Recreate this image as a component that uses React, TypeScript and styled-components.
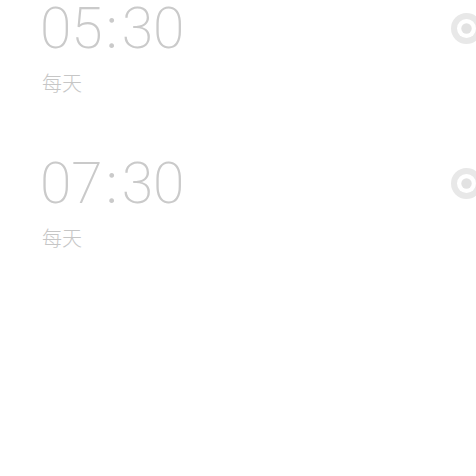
import React from 'react'
import styled, { createGlobalStyle } from 'styled-components'

const GlobalStyle = createGlobalStyle`
  html, body {
    margin: 0;
    padding: 0;
    background: #ffffff;
    overflow: hidden;
  }
  body {
    font-family: Roboto, "Noto Sans CJK SC", sans-serif;
  }
`

const alarms = [
  { hour: '05', minute: '30', repeat: '每天' },
  { hour: '07', minute: '30', repeat: '每天' },
]

export default function App() {
  return (
    <Page>
      <GlobalStyle />
      {alarms.map((a) => (
        <AlarmRow key={a.hour + a.minute}>
          <TimeBlock>
            <TimeText>
              {a.hour}
              <Colon>:</Colon>
              {a.minute}
            </TimeText>
            <RepeatText>{a.repeat}</RepeatText>
          </TimeBlock>
          <Switch />
        </AlarmRow>
      ))}
    </Page>
  )
}

function Switch() {
  return (
    <SwitchIcon width="25" height="31" viewBox="0 0 25 31">
      <circle cx="15.5" cy="15.5" r="15.5" fill="#e8e8e8" />
      <circle cx="15.5" cy="15.5" r="9.5" fill="#ffffff" />
      <circle cx="15.5" cy="15.5" r="5.2" fill="#e2e2e2" />
    </SwitchIcon>
  )
}

const Page = styled.div`
  width: 476px;
  height: 476px;
  display: flex;
  flex-direction: column;
  gap: 60px;
  box-sizing: border-box;
`

const AlarmRow = styled.div`
  display: flex;
  align-items: flex-start;
  justify-content: space-between;
  padding-left: 40px;
`

const TimeBlock = styled.div`
  display: flex;
  flex-direction: column;
`

const TimeText = styled.span`
  font-family: Roboto, sans-serif;
  font-weight: 200;
  font-size: 57px;
  line-height: 57px;
  color: #cacaca;
  white-space: nowrap;
`

const Colon = styled.span`
  margin: 0 4px 0 3px;
  font-weight: 300;
`

const RepeatText = styled.span`
  font-family: "Noto Sans CJK SC", sans-serif;
  font-weight: 300;
  font-size: 20px;
  line-height: 24px;
  margin-top: 14px;
  padding-left: 2px;
  color: #c6c6c6;
`

const SwitchIcon = styled.svg`
  margin-top: 13px;
  flex-shrink: 0;
`
